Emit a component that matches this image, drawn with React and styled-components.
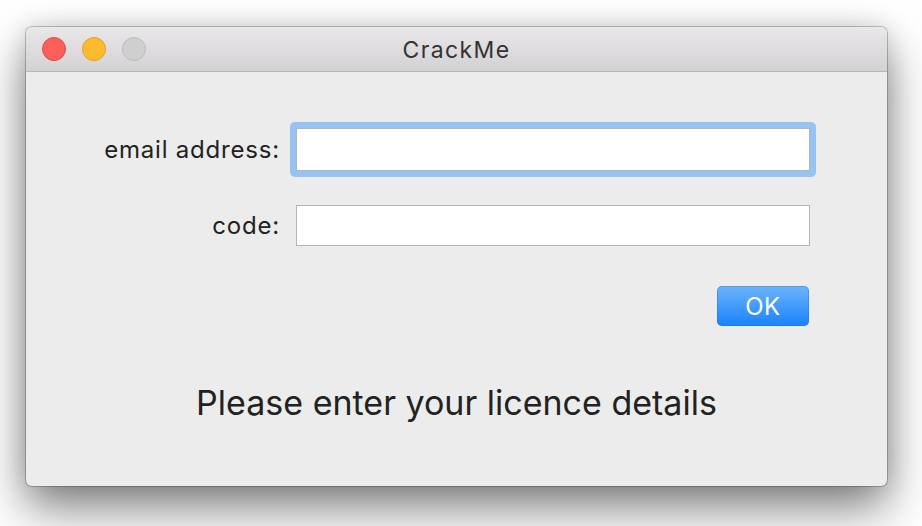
import React from "react";
import styled, { createGlobalStyle } from "styled-components";

const GlobalStyle = createGlobalStyle`
  html, body {
    margin: 0;
    padding: 0;
    background: #ffffff;
    font-family: Inter, "Liberation Sans", Arial, sans-serif;
  }
`;

const Page = styled.div`
  width: 922px;
  height: 526px;
  overflow: hidden;
  padding: 27px 0 0 26px;
  box-sizing: border-box;
`;

const Window = styled.div`
  width: 861px;
  height: 459px;
  display: flex;
  flex-direction: column;
  border-radius: 6px;
  background: #ececec;
  box-shadow: 0 0 0 1px rgba(0, 0, 0, 0.22), 0 22px 48px rgba(0, 0, 0, 0.5),
    0 0 24px rgba(0, 0, 0, 0.12);
  overflow: hidden;
`;

const TitleBar = styled.div`
  height: 44px;
  flex: none;
  position: relative;
  display: flex;
  align-items: center;
  justify-content: center;
  background: linear-gradient(#e9e7e9, #d3d1d3);
  border-bottom: 1px solid #b8b6b8;
`;

const Lights = styled.div`
  position: absolute;
  left: 16px;
  top: 10px;
  display: flex;
  gap: 16px;
`;

const Light = styled.span`
  width: 22px;
  height: 22px;
  border-radius: 50%;
  background: ${(p) => p.fill};
  border: 1px solid ${(p) => p.edge};
`;

const Title = styled.span`
  font-size: 23px;
  color: #333333;
  letter-spacing: 1.4px;
  margin-top: 2px;
`;

const Body = styled.div`
  flex: 1;
  display: flex;
  flex-direction: column;
  align-items: center;
`;

const Form = styled.div`
  align-self: flex-start;
  display: grid;
  grid-template-columns: 254px 512px;
  column-gap: 17px;
  margin-top: 57px;
`;

const Label = styled.label`
  justify-self: end;
  align-self: center;
  font-size: 24px;
  letter-spacing: 0.8px;
  color: #222222;
  margin-top: ${(p) => p.top || 0}px;
`;

const Ring = styled.div`
  margin: -7px;
  padding: 6px;
  border-radius: 5px;
  background: ${(p) => (p.focused ? "#97c3f2" : "transparent")};
  margin-top: ${(p) => (p.top || 0) - 7}px;
`;

const Field = styled.input`
  display: block;
  width: 100%;
  height: 43px;
  box-sizing: border-box;
  border: 1px solid #b5b5b5;
  background: #ffffff;
  outline: none;
  font-size: 20px;
  padding: 0 6px;
`;

const ButtonRow = styled.div`
  grid-column: 2;
  display: flex;
  justify-content: flex-end;
  margin-top: 41px;
`;

const OkButton = styled.button`
  width: 92px;
  height: 40px;
  border: none;
  border-radius: 5px;
  background: linear-gradient(#6db4fb, #1a82fb);
  box-shadow: inset 0 0 0 1px rgba(20, 110, 230, 0.35);
  color: #ffffff;
  font-family: inherit;
  font-size: 24px;
  letter-spacing: 0.5px;
  padding: 0;
`;

const Status = styled.div`
  margin-top: 56px;
  font-size: 34px;
  color: #222222;
`;

export default function App() {
  return (
    <Page>
      <GlobalStyle />
      <Window>
        <TitleBar>
          <Lights>
            <Light fill="#fc5f57" edge="#df4a43" />
            <Light fill="#fdbc2e" edge="#dea225" />
            <Light fill="#d0cfd0" edge="#bdbcbd" />
          </Lights>
          <Title>CrackMe</Title>
        </TitleBar>
        <Body>
          <Form>
            <Label>email address:</Label>
            <Ring focused>
              <Field />
            </Ring>
            <Label top={36}>code:</Label>
            <Ring top={36}>
              <Field style={{ height: 41 }} />
            </Ring>
            <ButtonRow>
              <OkButton>OK</OkButton>
            </ButtonRow>
          </Form>
          <Status>Please enter your licence details</Status>
        </Body>
      </Window>
    </Page>
  );
}
